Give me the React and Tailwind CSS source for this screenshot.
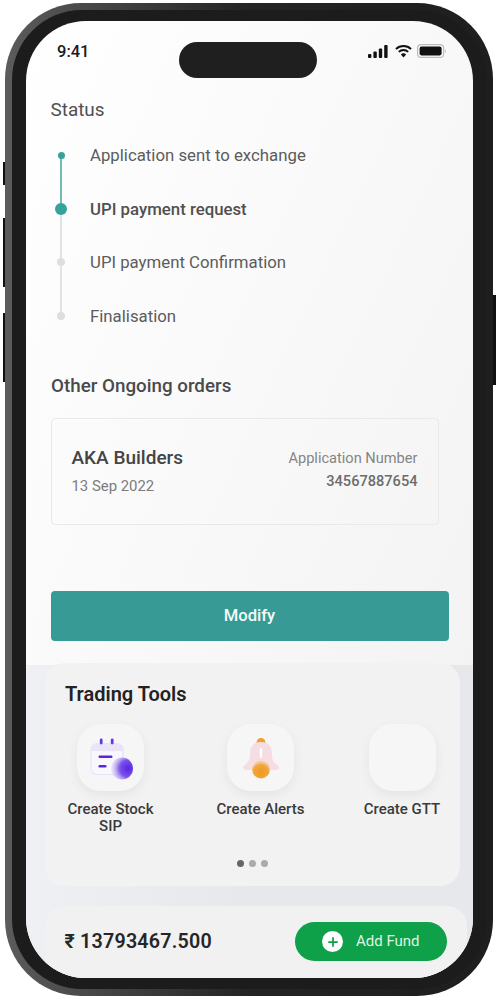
import React from 'react';
import { Plus } from 'lucide-react';

const steps = [
    { label: 'Application sent to exchange', state: 'done' },
    { label: 'UPI payment request', state: 'active' },
    { label: 'UPI payment Confirmation', state: 'todo' },
    { label: 'Finalisation', state: 'todo' },
];

const StatusIcons = () => (
    <div className="flex items-center">
        <svg width="20" height="13" viewBox="0 0 20 13">
            <rect x="0" y="9" width="3.4" height="4" rx="1" fill="#111" />
            <rect x="5.4" y="6.5" width="3.4" height="6.5" rx="1" fill="#111" />
            <rect x="10.8" y="3.5" width="3.4" height="9.5" rx="1" fill="#111" />
            <rect x="16.2" y="0" width="3.4" height="13" rx="1" fill="#111" />
        </svg>
        <svg className="ml-[7px]" width="17" height="14" viewBox="0 0 18 14">
            <path d="M1 5 A11.5 11.5 0 0 1 17 5" fill="none" stroke="#111" strokeWidth="2" />
            <path d="M4 8 A7.2 7.2 0 0 1 14 8" fill="none" stroke="#111" strokeWidth="2" />
            <path d="M6.2 10.8 A4 4 0 0 1 11.8 10.8 L9 13.8 Z" fill="#111" />
        </svg>
        <svg className="ml-[5px]" width="30" height="14" viewBox="0 0 30 14">
            <rect x="0.6" y="0.6" width="26" height="12.8" rx="3.5" fill="none" stroke="#bdbdbd" strokeWidth="1.2" />
            <rect x="2.6" y="2.6" width="22" height="8.8" rx="1.8" fill="#111" />
            <path d="M28 5 C29.2 5.4 29.2 8.6 28 9 Z" fill="#bdbdbd" />
        </svg>
    </div>
);

const SipIcon = () => (
    <svg className="blur-[0.4px]" width="46" height="46" viewBox="0 0 46 46">
        <defs>
            <radialGradient id="coin" cx="0.78" cy="0.5" r="0.85">
                <stop offset="0" stopColor="#5526de" />
                <stop offset="0.45" stopColor="#7a52ea" />
                <stop offset="1" stopColor="#d8cef8" stopOpacity="0.1" />
            </radialGradient>
        </defs>
        <rect x="3" y="8.5" width="32" height="31" rx="6" fill="#f8f7fc" stroke="#e8e2fa" strokeWidth="1.2" />
        <path d="M3.5 16 C3.5 11 6 9 10 9 H28 C32 9 34.5 11 34.5 16 Z" fill="#e6defb" opacity="0.75" />
        <rect x="11.8" y="3.5" width="2.8" height="6" rx="1.4" fill="#6a35e8" />
        <rect x="22.8" y="3.5" width="2.8" height="6" rx="1.4" fill="#6a35e8" />
        <rect x="10.5" y="20.5" width="14" height="2.4" rx="1.2" fill="#5a25e0" />
        <rect x="10.5" y="30" width="8" height="2.4" rx="1.2" fill="#5a25e0" />
        <circle cx="34" cy="33.5" r="11" fill="url(#coin)" />
    </svg>
);

const BellIcon = () => (
    <svg className="blur-[0.4px]" width="46" height="46" viewBox="0 0 46 46">
        <defs>
            <radialGradient id="clapper" cx="0.5" cy="0.65" r="0.6">
                <stop offset="0" stopColor="#f09a20" />
                <stop offset="0.7" stopColor="#f2a63c" />
                <stop offset="1" stopColor="#f6c27e" stopOpacity="0.5" />
            </radialGradient>
        </defs>
        <path d="M23 3 C20 3 18.5 5.5 18.5 8 H27.5 C27.5 5.5 26 3 23 3 Z" fill="#f0a030" />
        <path d="M23 7 C14 7 12 13 12 20 C12 26 9 28.5 5.5 31 C4 33 6 35 9 35 H37 C40 35 42 33 40.5 31 C37 28.5 34 26 34 20 C34 13 32 7 23 7 Z" fill="#f5dde2" />
        <rect x="21.8" y="13" width="2.4" height="10" rx="1.2" fill="#ffffff" />
        <circle cx="23" cy="34.5" r="9" fill="url(#clapper)" />
    </svg>
);

const tools = [
    { label: <>Create Stock<br />SIP</>, icon: <SipIcon /> },
    { label: 'Create Alerts', icon: <BellIcon /> },
    { label: 'Create GTT', icon: null },
];

const Step = ({ label, state, index }) => (
    <div className="relative flex items-center h-[53.5px]">
        {index < 3 && (
            <div className={`absolute left-[9.5px] top-[26px] w-[2px] h-[54px] ${state === 'done' ? 'bg-[#74bcb6]' : 'bg-[#e2e2e2]'}`}></div>
        )}
        <div className="relative w-[21px] flex justify-center">
            {state === 'done' && <div className="w-[7px] h-[7px] rounded-full bg-[#36a29b]"></div>}
            {state === 'active' && <div className="w-[12px] h-[12px] rounded-full bg-[#36a29b]"></div>}
            {state === 'todo' && <div className="w-[8px] h-[8px] rounded-full bg-[#dedede]"></div>}
        </div>
        <span className={`ml-[18.5px] text-[16.8px] leading-6 ${state === 'active' ? 'font-medium text-[#505050]' : 'text-[#5c5c5c]'}`}>{label}</span>
    </div>
);

export default function App() {
    return (
        <div className="relative w-[497px] h-[1000px] bg-white overflow-hidden font-['Roboto',sans-serif]">
            {/* side buttons */}
            <div className="absolute left-[2.5px] top-[162px] w-[4px] h-[23px] bg-[#111]"></div>
            <div className="absolute left-[2.5px] top-[218px] w-[4px] h-[69px] bg-[#111]"></div>
            <div className="absolute left-[2.5px] top-[313px] w-[4px] h-[69px] bg-[#111]"></div>
            <div className="absolute left-[492px] top-[295px] w-[4px] h-[90px] bg-[#111]"></div>

            {/* phone body */}
            <div className="relative ml-[5px] mt-[3px] w-[488px] h-[993px] rounded-[76px] bg-gradient-to-r from-[#5c5c5c] via-[#242424] to-[#1e1e1e] p-[7px]">
                <div className="w-full h-full rounded-[70px] bg-[#1c1c1c] pt-[11px] pb-[11px] pl-[14px] pr-[13px]">
                    {/* screen */}
                    <div className="relative w-full h-full flex flex-col rounded-[60px] overflow-hidden bg-gradient-to-br from-white to-[#f1f1f2]">
                        <div className="absolute left-[153px] top-[21px] w-[138px] h-[36px] rounded-full bg-[#1f1f1f]"></div>

                        <div className="shrink-0 h-[77px] pt-[20px] pl-[31px] pr-[26px] flex items-start justify-between">
                            <span className="text-[16.5px] leading-[22px] font-medium text-[#1a1a1a]">9:41</span>
                            <div className="h-[20px] flex items-center"><StatusIcons /></div>
                        </div>

                        <div className="shrink-0 px-[24.5px]">
                            <h2 className="text-[18.9px] leading-6 text-[#505050]">Status</h2>
                            <div className="mt-[6.5px]">
                                {steps.map((step, i) => (
                                    <Step key={step.label} index={i} label={step.label} state={step.state} />
                                ))}
                            </div>

                            <h2 className="mt-[31.5px] ml-[0.5px] text-[18.8px] leading-6 font-medium text-[#4a4a4a]">Other Ongoing orders</h2>

                            <div className="mt-[20px] w-[388px] h-[107px] border border-[#e9e9e9] rounded-[4px] px-[20px] pt-[27px] flex justify-between">
                                <div>
                                    <p className="text-[19px] leading-6 font-medium text-[#444444]">AKA Builders</p>
                                    <p className="mt-[6px] text-[14.9px] leading-5 text-[#7c7c7c]">13 Sep 2022</p>
                                </div>
                                <div className="text-right pt-[2px]">
                                    <p className="text-[14.6px] leading-5 text-[#858585]">Application Number</p>
                                    <p className="mt-[3px] text-[14.6px] leading-5 font-medium text-[#6c6c6c]">34567887654</p>
                                </div>
                            </div>

                            <button className="mt-[66px] w-[398px] h-[50px] rounded-[4px] bg-[#379a95] text-[#f4fbfa] text-[16.6px] font-medium">Modify</button>
                        </div>

                        {/* lower sheet */}
                        <div className="mt-[24px] flex-1 min-h-0 bg-gradient-to-r from-[#eef0f3] via-[#e6e8ec] to-[#e6e8ec] pl-[18.5px]">
                            <div className="w-[415.5px] h-[223px] -mt-[2px] rounded-[20px] bg-[#f2f2f3] pt-[19px]">
                                <h3 className="pl-[20.5px] text-[20px] leading-6 font-semibold text-[#222222]">Trading Tools</h3>
                                <div className="mt-[18px] pl-[16px] grid grid-cols-[150px_141.5px_100px]">
                                    {tools.map((tool, i) => (
                                        <div key={i} className="w-[100px] flex flex-col items-center">
                                            <div className="w-[67px] h-[67px] rounded-[24px] bg-[#f6f6f7] shadow-[0_4px_12px_rgba(0,0,0,0.06)] flex items-center justify-center">
                                                {tool.icon}
                                            </div>
                                            <p className="mt-[10px] text-[15px] leading-[17px] font-medium text-center whitespace-nowrap text-[#3a3a3a]">{tool.label}</p>
                                        </div>
                                    ))}
                                </div>
                                <div className="mt-[24.5px] pl-[192px] flex items-center gap-[5px]">
                                    <div className="w-[7px] h-[7px] rounded-full bg-[#666666]"></div>
                                    <div className="w-[7px] h-[7px] rounded-full bg-[#aaaaaa]"></div>
                                    <div className="w-[7px] h-[7px] rounded-full bg-[#aaaaaa]"></div>
                                </div>
                            </div>
                            <div className="mt-[20px] w-[422px] h-[80px] rounded-t-[20px] bg-[#f1f1f2] pl-[20px] pr-[19.5px] pt-[16px] flex items-start justify-between">
                                <span className="h-[39px] leading-[39px] text-[19.7px] font-semibold tracking-[0.2px] text-[#262626]">₹ 13793467.500</span>
                                <button className="w-[152px] h-[39px] rounded-full bg-[#0fa14a] flex items-center pl-[27px]">
                                    <span className="w-[21px] h-[21px] rounded-full bg-white flex items-center justify-center">
                                        <Plus className="w-[14px] h-[14px] text-[#0fa14a]" strokeWidth={3} />
                                    </span>
                                    <span className="ml-[13px] text-[15px] text-[#dff3e6]">Add Fund</span>
                                </button>
                            </div>
                        </div>
                    </div>
                </div>
            </div>
        </div>
    );
}
